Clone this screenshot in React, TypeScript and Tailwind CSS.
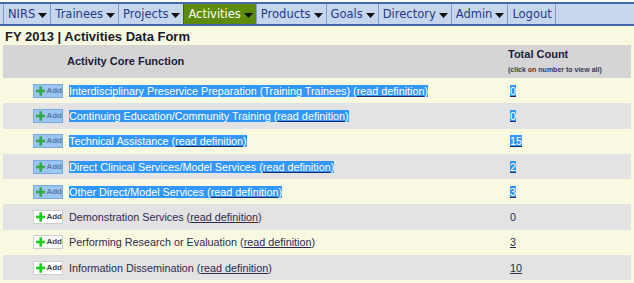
import React from "react";

const navItems = [
  { label: "NIRS", caret: true },
  { label: "Trainees", caret: true },
  { label: "Projects", caret: true },
  { label: "Activities", caret: true, active: true },
  { label: "Products", caret: true },
  { label: "Goals", caret: true },
  { label: "Directory", caret: true },
  { label: "Admin", caret: true },
  { label: "Logout", caret: false },
];

const rows = [
  { name: "Interdisciplinary Preservice Preparation (Training Trainees)", count: "0", sel: true, link: true },
  { name: "Continuing Education/Community Training", count: "0", sel: true, link: true },
  { name: "Technical Assistance", count: "15", sel: true, link: true },
  { name: "Direct Clinical Services/Model Services", count: "2", sel: true, link: true },
  { name: "Other Direct/Model Services", count: "3", sel: true, link: true },
  { name: "Demonstration Services", count: "0", sel: false, link: false },
  { name: "Performing Research or Evaluation", count: "3", sel: false, link: true },
  { name: "Information Dissemination", count: "10", sel: false, link: true },
];

function Caret() {
  return (
    <svg width="9" height="5" viewBox="0 0 9 5" className="ml-[3px] mt-[2px]">
      <polygon points="0,0 9,0 4.5,5" fill="#111" />
    </svg>
  );
}

function AddButton({ sel }: { sel: boolean }) {
  return (
    <div
      className={
        "flex items-center h-[14px] w-[30px] pl-[2px] border " +
        (sel ? "bg-[#9cc6f2] border-[#7aa9dd]" : "bg-white border-[#cfcfcf]")
      }
    >
      <svg width="10" height="10" viewBox="0 0 10 10">
        <rect x="3.6" y="0" width="2.8" height="10" fill={sel ? "#35a84a" : "#1fcf1f"} />
        <rect x="0" y="3.6" width="10" height="2.8" fill={sel ? "#35a84a" : "#1fcf1f"} />
      </svg>
      <span
        className={
          "ml-[1px] text-[8px] leading-none font-bold " + (sel ? "text-[#5a7aa8]" : "text-[#444]")
        }
        style={{ fontFamily: '"Liberation Sans", Arial, sans-serif' }}
      >
        Add
      </span>
    </div>
  );
}

export default function App() {
  return (
    <div
      className="w-[634px] h-[283px] bg-[#f9f9e2] overflow-hidden text-[#23234a]"
      style={{ fontFamily: '"Liberation Sans", Arial, sans-serif' }}
    >
      <div className="bg-white h-[2px]" />
      <nav
        className="flex h-[24px] bg-[#c6d6ec] border-y-2 border-[#4767ad] pl-[3px]"
        style={{ fontFamily: '"DejaVu Sans", Verdana, sans-serif' }}
      >
        {navItems.map((it) => (
          <div
            key={it.label}
            className={
              "flex items-center pl-[4px] pr-[3px] pt-[1px] text-[11.5px] leading-none border-l " +
              (it.active
                ? "bg-[#5d8b0c] text-white border-[#3f6a05]"
                : "text-[#1f3a8a] border-[#7f9fd0]")
            }
          >
            <span>{it.label}</span>
            {it.caret && <Caret />}
          </div>
        ))}
        <div className="border-l border-[#7f9fd0]" />
      </nav>

      <div className="pl-[5px] pt-[3px] h-[19px] text-[13px] font-bold leading-[16px] text-[#1a1a2a]">
        FY 2013 | Activities Data Form
      </div>

      <div className="mx-[3px] flex flex-col">
        <div className="flex h-[33px] bg-[#d5d5d5]">
          <div className="w-[505px] pl-[64px] flex items-center text-[11px] font-bold text-[#1b1b3a]">
            Activity Core Function
          </div>
          <div className="flex flex-col pt-[3px]">
            <span className="text-[11px] font-bold leading-[13px] text-[#1b1b3a]">Total Count</span>
            <span className="text-[7px] leading-[9px] mt-[4px] font-bold text-[#3a3a55]">
              (click on number to view all)
            </span>
          </div>
        </div>
        {rows.map((r, i) => (
          <div
            key={r.name}
            className={
              "flex items-center h-[25.3px] " + (i % 2 === 1 ? "bg-[#e3e3e3]" : "")
            }
          >
            <div className="w-[505px] flex items-center pl-[30px]">
              <AddButton sel={r.sel} />
              <div className="ml-[6px] text-[10.8px] leading-[14px]">
                {r.sel ? (
                  <span className="bg-[#3297fd] text-white">
                    {r.name} (<span className="underline decoration-[#1a2a6a]">read definition</span>)
                  </span>
                ) : (
                  <span className="text-[#2a2a55]">
                    {r.name} (<span className="underline">read definition</span>)
                  </span>
                )}
              </div>
            </div>
            <div className="pl-[2px] text-[10.8px] leading-[14px]">
              {r.sel ? (
                <span className="bg-[#3297fd] text-white underline decoration-[#1a2a6a]">{r.count}</span>
              ) : r.link ? (
                <span className="underline text-[#2a2a55]">{r.count}</span>
              ) : (
                <span className="text-[#2a2a55]">{r.count}</span>
              )}
            </div>
          </div>
        ))}
      </div>
    </div>
  );
}
